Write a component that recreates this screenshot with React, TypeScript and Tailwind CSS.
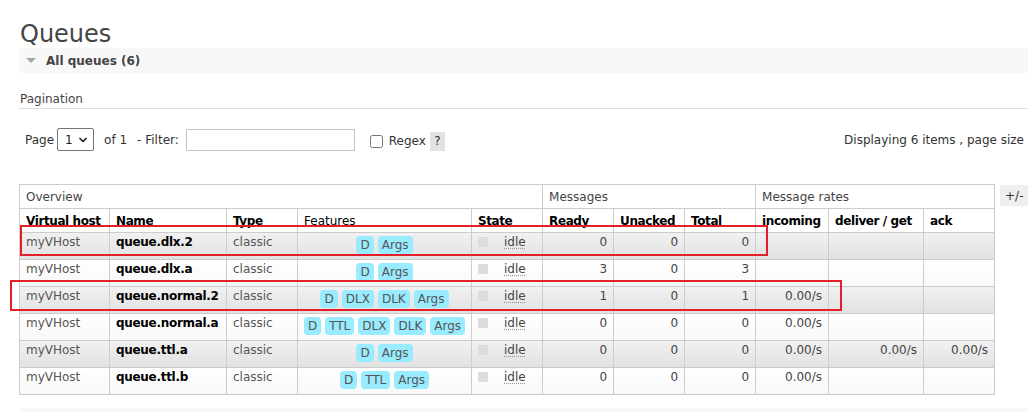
import { ChevronDown } from 'lucide-react'

type Queue = {
    name: string
    features: string[]
    ready: number
    unacked: number
    total: number
    incoming?: string
    deliver?: string
    ack?: string
}

const queues: Queue[] = [
    { name: 'queue.dlx.2', features: ['D', 'Args'], ready: 0, unacked: 0, total: 0 },
    { name: 'queue.dlx.a', features: ['D', 'Args'], ready: 3, unacked: 0, total: 3 },
    { name: 'queue.normal.2', features: ['D', 'DLX', 'DLK', 'Args'], ready: 1, unacked: 0, total: 1, incoming: '0.00/s' },
    { name: 'queue.normal.a', features: ['D', 'TTL', 'DLX', 'DLK', 'Args'], ready: 0, unacked: 0, total: 0, incoming: '0.00/s' },
    { name: 'queue.ttl.a', features: ['D', 'Args'], ready: 0, unacked: 0, total: 0, incoming: '0.00/s', deliver: '0.00/s', ack: '0.00/s' },
    { name: 'queue.ttl.b', features: ['D', 'TTL', 'Args'], ready: 0, unacked: 0, total: 0, incoming: '0.00/s' },
]

const td = 'border border-[#ccc] h-[27px] px-[6px] pt-[2px] align-top whitespace-nowrap'
const th = 'border border-[#ccc] h-[24px] px-[6px] pt-[5px] align-top text-left whitespace-nowrap'

export default function App() {
    return (
        <div className="h-[412px] w-[1028px] overflow-hidden bg-white pl-[19px] font-['DejaVu_Sans',Verdana,sans-serif] text-[12px] leading-[14px] text-[#444]">

            {/* TITULO */}
            <h1 className="mt-[21px] pl-[1px] text-[24px] leading-[27px] text-[#444]">Queues</h1>

            {/* SECCAO */}
            <div className="flex h-[25px] items-center bg-[#f8f8f8]">
                <svg width="10" height="5" viewBox="0 0 10 5" className="ml-[7px]">
                    <path d="M0 0 L10 0 L5 5 Z" fill="#a5a5a5" />
                </svg>
                <span className="ml-[10px] font-bold">All queues (6)</span>
            </div>

            {/* PAGINACAO */}
            <div className="mt-[19px] border-b border-[#ddd] pb-[2px] pl-[1px]">Pagination</div>

            <div className="mt-[19px] flex h-[23px] items-center justify-between pr-[4px] text-[#333]">
                <div className="flex items-center">
                    <span className="ml-[6px]">Page</span>
                    <div className="relative ml-[3px] h-[23px] w-[37px]">
                        <select className="h-full w-full appearance-none rounded-[2px] border border-[#767676] bg-white pl-[7px] text-[12px] text-[#222]">
                            <option>1</option>
                        </select>
                        <ChevronDown size={12} strokeWidth={3.5} className="pointer-events-none absolute right-[5px] top-[6px] text-[#222]" />
                    </div>
                    <span className="ml-[10px]">of 1</span>
                    <span className="ml-[10px]">- Filter:</span>
                    <input className="ml-[7px] h-[22px] w-[169px] border border-[#c4c4c4] bg-white" />
                    <div className="ml-[15px] mt-[3px] flex items-center">
                        <input type="checkbox" className="h-[13px] w-[13px]" />
                        <span className="ml-[6px]">Regex</span>
                        <span className="ml-[4px] flex h-[19px] w-[15px] items-center justify-center bg-[#e2e2e2]">?</span>
                    </div>
                </div>
                <span>Displaying 6 items , page size</span>
            </div>

            {/* TABELA */}
            <div className="mt-[33px] flex items-start">
                <div className="relative">
                    <table className="w-[975px] table-fixed border-collapse">
                        <colgroup>
                            <col className="w-[90px]" />
                            <col className="w-[117px]" />
                            <col className="w-[71px]" />
                            <col className="w-[174px]" />
                            <col className="w-[71px]" />
                            <col className="w-[71px]" />
                            <col className="w-[71px]" />
                            <col className="w-[71px]" />
                            <col className="w-[73px]" />
                            <col className="w-[95px]" />
                            <col className="w-[71px]" />
                        </colgroup>
                        <thead>
                            <tr>
                                <th colSpan={5} className={`${th} font-normal`}>Overview</th>
                                <th colSpan={3} className={`${th} font-normal`}>Messages</th>
                                <th colSpan={3} className={`${th} font-normal`}>Message rates</th>
                            </tr>
                            <tr className="text-black tracking-[-0.4px]">
                                <th className={th}>Virtual host</th>
                                <th className={th}>Name</th>
                                <th className={th}>Type</th>
                                <th className={`${th} font-normal tracking-normal`}>Features</th>
                                <th className={th}>State</th>
                                <th className={th}>Ready</th>
                                <th className={th}>Unacked</th>
                                <th className={th}>Total</th>
                                <th className={th}>incoming</th>
                                <th className={th}>deliver / get</th>
                                <th className={th}>ack</th>
                            </tr>
                        </thead>
                        <tbody>
                            {queues.map((q, i) => (
                                <tr
                                    key={q.name}
                                    className={
                                        i % 2 === 0
                                            ? 'bg-linear-to-b from-[#f1f1f1] to-[#e1e1e1]'
                                            : 'bg-linear-to-b from-white to-[#f8f8f8]'
                                    }
                                >
                                    <td className={`${td} text-[#555]`}>myVHost</td>
                                    <td className={`${td} font-bold tracking-[-0.3px] text-black`}>{q.name}</td>
                                    <td className={`${td} text-[#555]`}>classic</td>
                                    <td className={`${td} pt-[3px]`}>
                                        <div className="flex justify-center gap-[4px]">
                                            {q.features.map((f) => (
                                                <span key={f} className="flex h-[18px] items-center rounded-[4px] bg-[#99ebff] px-[4px] text-[#555]">
                                                    {f}
                                                </span>
                                            ))}
                                        </div>
                                    </td>
                                    <td className={td}>
                                        <div className="flex items-start">
                                            <span className="mt-[2px] h-[10px] w-[10px] bg-[#dddddd]" />
                                            <span className="ml-[16px] underline decoration-dotted decoration-[#999] underline-offset-[2px]">idle</span>
                                        </div>
                                    </td>
                                    <td className={`${td} text-right`}>{q.ready}</td>
                                    <td className={`${td} text-right`}>{q.unacked}</td>
                                    <td className={`${td} text-right`}>{q.total}</td>
                                    <td className={`${td} text-right`}>{q.incoming}</td>
                                    <td className={`${td} text-right`}>{q.deliver}</td>
                                    <td className={`${td} text-right`}>{q.ack}</td>
                                </tr>
                            ))}
                        </tbody>
                    </table>

                    {/* MARCACOES */}
                    <div className="absolute left-[1px] top-[41px] h-[31px] w-[748px] border-2 border-[#e3202a]" />
                    <div className="absolute left-[-9px] top-[96px] h-[31px] w-[832px] border-2 border-[#e3202a]" />
                </div>

                <div className="ml-[5px] mt-[1px] flex h-[21px] w-[40px] items-center bg-[#eee] pl-[5px] text-[#333]">+/-</div>
            </div>

            <div className="mt-[13px] h-[25px] bg-[#f8f8f8]" />
        </div>
    )
}
